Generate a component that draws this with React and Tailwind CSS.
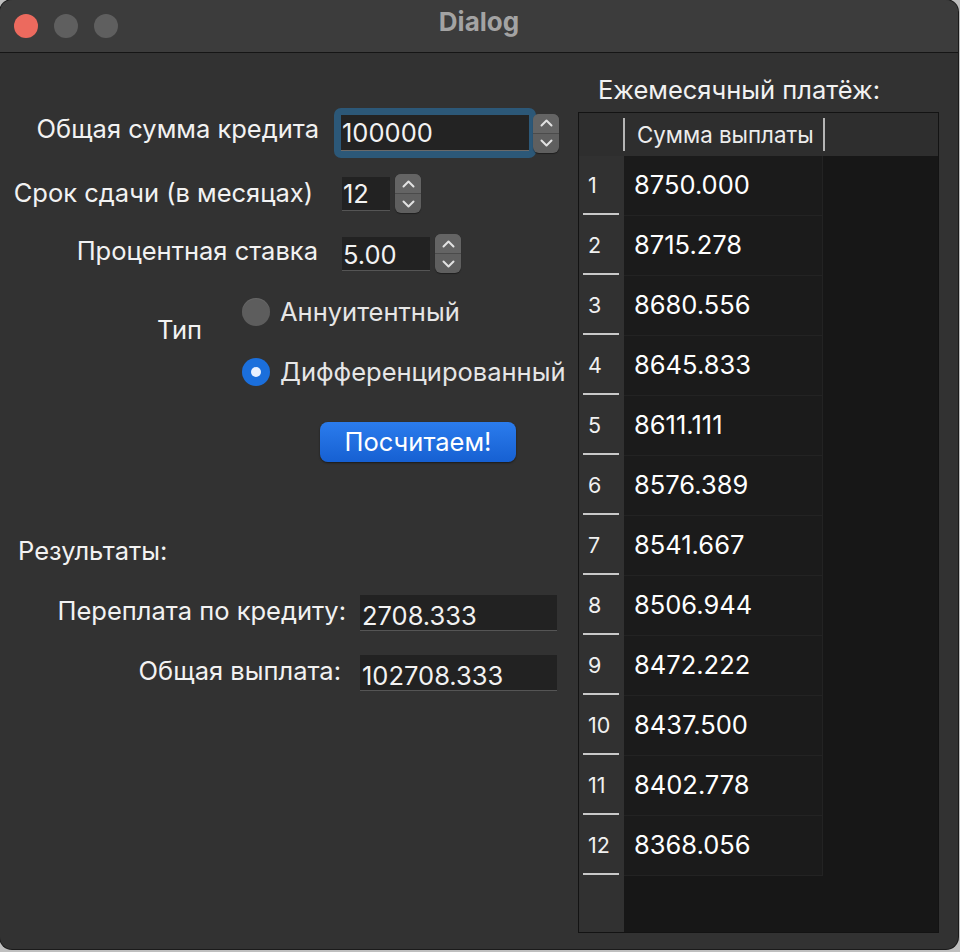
import React from "react";

const F = { fontFamily: "Inter, 'Noto Sans', 'Liberation Sans', sans-serif" };

function Spinner() {
  return (
    <div className="w-[26px] h-[39px] rounded-[6px] bg-[#5f5f5f] flex flex-col overflow-hidden shadow-[0_1px_1px_rgba(0,0,0,0.4)]">
      <div className="flex-1 flex items-center justify-center border-b border-[#4b4b4b] bg-[#646464]">
        <svg width="13" height="8" viewBox="0 0 13 8"><path d="M1.5 6.5 L6.5 1.5 L11.5 6.5" fill="none" stroke="#e2e2e2" strokeWidth="2" strokeLinecap="round" strokeLinejoin="round" /></svg>
      </div>
      <div className="flex-1 flex items-center justify-center">
        <svg width="13" height="8" viewBox="0 0 13 8"><path d="M1.5 1.5 L6.5 6.5 L11.5 1.5" fill="none" stroke="#e2e2e2" strokeWidth="2" strokeLinecap="round" strokeLinejoin="round" /></svg>
      </div>
    </div>
  );
}

const rows = [
  "8750.000", "8715.278", "8680.556", "8645.833", "8611.111", "8576.389",
  "8541.667", "8506.944", "8472.222", "8437.500", "8402.778", "8368.056",
];

export default function App() {
  return (
    <div className="w-[960px] h-[952px] bg-[#bfbfbf] overflow-hidden" style={F}>
      <div className="w-[958px] h-[949px] rounded-[12px] bg-[#323232] flex flex-col overflow-hidden shadow-[0_0_0_1px_#1a1a1a]">
        {/* title bar */}
        <div className="h-[53px] bg-[#3c3c3c] border-b border-[#151515] flex items-center relative shrink-0">
          <div className="flex items-center gap-[16px] ml-[14px]">
            <div className="w-[24px] h-[24px] rounded-full bg-[#ec6a5e]" />
            <div className="w-[24px] h-[24px] rounded-full bg-[#5f5f5f]" />
            <div className="w-[24px] h-[24px] rounded-full bg-[#5f5f5f]" />
          </div>
          <div className="absolute left-0 right-0 top-[7px] text-center text-[26px] leading-[30px] font-bold text-[#a3a3a3]">Dialog</div>
        </div>

        {/* body */}
        <div className="flex-1 flex text-[#f2f2f2]">
          {/* left */}
          <div className="w-[578px] flex flex-col text-[25.5px] leading-[30px]">
            <div className="mt-[55px] h-[50px] flex items-center">
              <div className="w-[334px] pr-[15px] text-right -mt-[8px] whitespace-nowrap">Общая сумма кредита</div>
              <div className="w-[202px] h-[50px] rounded-[7px] bg-[#2c5878] p-[7px]">
                <div className="w-full h-full bg-[#232323] border-b border-[#6a6a6a] pl-[1px] leading-[36px]">100000</div>
              </div>
              <div className="-ml-[3px]"><Spinner /></div>
            </div>

            <div className="mt-[16px] h-[39px] flex items-center">
              <div className="w-[342px] pr-[29px] text-right -mt-[2px] whitespace-nowrap">Срок сдачи (в месяцах)</div>
              <div className="w-[48px] h-[34px] bg-[#222222] border-b border-[#555] pl-[1px] leading-[34px]">12</div>
              <div className="ml-[5px]"><Spinner /></div>
            </div>

            <div className="mt-[21px] h-[39px] flex items-center">
              <div className="w-[342px] pr-[24px] text-right -mt-[6px] whitespace-nowrap">Процентная ставка</div>
              <div className="w-[88px] h-[34px] bg-[#222222] border-b border-[#555] pl-[1px] leading-[36px]">5.00</div>
              <div className="ml-[5px]"><Spinner /></div>
            </div>

            <div className="mt-[19px] flex">
              <div className="w-[242px] pr-[40px] text-right mt-[23px]">Тип</div>
              <div className="flex flex-col gap-[20px]">
                <div className="h-[40px] flex items-center">
                  <div className="w-[28px] h-[28px] rounded-full bg-[#5d5d5d] shadow-[inset_0_1px_1px_rgba(255,255,255,0.08)]" />
                  <span className="ml-[10px] text-[#e6e6e6] whitespace-nowrap">Аннуитентный</span>
                </div>
                <div className="h-[40px] flex items-center">
                  <div className="w-[28px] h-[28px] rounded-full bg-[#1b6fdc] flex items-center justify-center">
                    <div className="w-[10px] h-[10px] rounded-full bg-[#e9f1ff]" />
                  </div>
                  <span className="ml-[10px] text-[#e6e6e6] whitespace-nowrap">Дифференцированный</span>
                </div>
              </div>
            </div>

            <div className="mt-[30px] ml-[320px] w-[196px] h-[40px] rounded-[8px] bg-gradient-to-b from-[#2b7ced] to-[#1660d2] flex items-center justify-center text-white shadow-[0_1px_2px_rgba(0,0,0,0.5)]">
              Посчитаем!
            </div>

            <div className="mt-[74px] ml-[18px]">Результаты:</div>

            <div className="mt-[29px] h-[36px] flex items-center">
              <div className="w-[360px] pr-[14px] text-right -mt-[4px] whitespace-nowrap">Переплата по кредиту:</div>
              <div className="w-[197px] h-[36px] bg-[#222222] border-b border-[#555] pl-[2px] leading-[42px]">2708.333</div>
            </div>

            <div className="mt-[24px] h-[36px] flex items-center">
              <div className="w-[360px] pr-[19px] text-right -mt-[4px] whitespace-nowrap">Общая выплата:</div>
              <div className="w-[197px] h-[36px] bg-[#222222] border-b border-[#555] pl-[2px] leading-[42px]">102708.333</div>
            </div>
          </div>

          {/* right */}
          <div className="flex flex-col">
            <div className="mt-[22px] pl-[20px] text-[25.5px] leading-[30px] whitespace-nowrap">Ежемесячный платёж:</div>
            <div className="mt-[7px] w-[361px] h-[821px] border border-[#131313] bg-[#171717] flex flex-col">
              <div className="h-[43px] bg-[#2e2e2e] flex items-center shrink-0">
                <div className="w-[44px]" />
                <div className="w-[2px] h-[33px] bg-[#b5b5b5]" />
                <div className="w-[198px] pl-[12px] text-[22.3px] text-[#ececec] leading-[30px] whitespace-nowrap">Сумма выплаты</div>
                <div className="w-[2px] h-[33px] bg-[#b5b5b5]" />
              </div>
              <div className="flex-1 flex">
                <div className="w-[45px] bg-[#313131] flex flex-col">
                  {rows.map((_, i) => (
                    <div key={i} className="h-[60px] flex flex-col">
                      <div className="flex-1 flex items-center pl-[9px] text-[21.5px] text-[#f0f0f0] mt-[1px]">{i + 1}</div>
                      <div className="ml-[4px] w-[36px] h-[2px] bg-[#c9c9c9] mb-[1px]" />
                    </div>
                  ))}
                </div>
                <div className="w-[199px] flex flex-col">
                  {rows.map((v) => (
                    <div key={v} className="h-[60px] bg-[#1b1b1b] border-b border-r border-[#232323] flex items-center pl-[10px] text-[25.5px] text-white">
                      {v}
                    </div>
                  ))}
                </div>
              </div>
            </div>
          </div>
        </div>
      </div>
    </div>
  );
}
